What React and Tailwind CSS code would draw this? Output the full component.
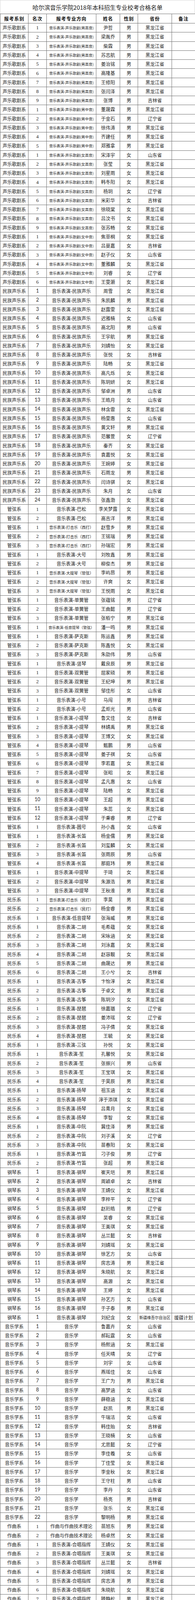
const PROV = { H: "黑龙江省", J: "吉林省", L: "辽宁省", S: "山东省", X: "新疆维吾尔自治区" };

// each entry: name + gender + province code, separated by spaces
const groups = [
  ["声乐歌剧系", "音乐表演-声乐歌剧(男高音)", "text-[9.5px]", "尹哲男H 梁胤乔男H 柴霖男H 苏志航男H 姜治铭男H 高隆基男H 王修阳男H 张闫泽男H 张博男J"],
  ["声乐歌剧系", "音乐表演-声乐歌剧(男中音)", "text-[9.5px]", "董晟霖男H 于金石男L 徐伟涛男H 齐建任男H 郑雅拿男H"],
  ["声乐歌剧系", "音乐表演-声乐歌剧(女高音)", "text-[9.5px]", "宋泽宇女S 张莹女H 刘星雨女H 韩冬阳女H 杨玥女L 米彩华女J 徐晓棠女H 吕汶书女H 张苏畅女H"],
  ["声乐歌剧系", "音乐表演-声乐歌剧(女中音)", "text-[9.5px]", "焦菲桐女H 吕曼嘉女J 赵子仪女S 董雅麟女H 刘睿女L 王雯灏女H"],
  ["民族声乐系", "音乐表演-民族声乐", "text-[12px]", "周雪女H 朱凯麟男H 赵露雯女H 迟雅楠女S 高北阳男S 王宇航男H 刘婧怡女H 张悦女J 陆畅女H 高凡烁女H 陈玥妍女H 邹卓洲男S 王皓月女S 林含霏女H 杨雯惠女S 黄文轩男H 范馨萱女L 秦齐女H 袁嘉悦女H 王婉婷女H 石雨龙男H 闫诗骐女H 朱月女S 张鑫渤女H"],
  ["管弦系", "音乐表演-巴松", "text-[12px]", "李关梦露女H 高吉洋男H"],
  ["管弦系", "音乐表演-打击乐（西打）", "text-[10px]", "赵雪乡男H 王铭瑞男H 孙瑞宏男H"],
  ["管弦系", "音乐表演-大号", "text-[12px]", "刘牧鑫男H 柳俊杰男H"],
  ["管弦系", "音乐表演-大提琴（管弦）", "text-[10px]", "李屿昂男H 许爽女H 王悦雨女H"],
  ["管弦系", "音乐表演-单簧管", "text-[12px]", "张蕴铭男L 王曲懿男L 张栢宁男H"],
  ["管弦系", "音乐表演-低音提琴（管弦）", "text-[9.5px]", "潘一鸣男H"],
  ["管弦系", "音乐表演-萨克斯", "text-[12px]", "陈运鑫男H 陈鑫悦女H 朱劭伟男S"],
  ["管弦系", "音乐表演-竖琴", "text-[12px]", "戴良辰男H"],
  ["管弦系", "音乐表演-双簧管", "text-[12px]", "屈家硕男H 王纪坤男H 邹佳彤女S"],
  ["管弦系", "音乐表演-小号", "text-[12px]", "马闯男J 孟炬光男S"],
  ["管弦系", "音乐表演-小提琴", "text-[12px]", "鲁文佳女J 林婧禹男H 王博文女H 甄鹏男S 姜子祺女S 李若嘉女H 张昭女H 孟凡惠女S 陆畅女H 王超男H 朱蕊女H 于秉睿男L"],
  ["管弦系", "音乐表演-圆号", "text-[12px]", "孙小鑫女S"],
  ["管弦系", "音乐表演-长笛", "text-[12px]", "杨金儒男H 刘玺麟女H 张雨辰男S 那庭玮男H"],
  ["管弦系", "音乐表演-中提琴", "text-[12px]", "于琦女H 朱源浩男H 王秋淮男H"],
  ["民乐系", "音乐表演-打击乐（民打）", "text-[10px]", "李昊男H 杨金睿男H"],
  ["民乐系", "音乐表演-低音提琴", "text-[12px]", "张海威男H"],
  ["民乐系", "音乐表演-二胡", "text-[12px]", "毛希蕴女H 宋咏涵女H 刘泳嘉女H 赵容靓女H 曲晟达男H 王小兮女J"],
  ["民乐系", "音乐表演-古筝", "text-[12px]", "卞怡淳女H 于卓文男H 陈玥汐女H"],
  ["民乐系", "音乐表演-琵琶", "text-[12px]", "徐嘉璐女L 姜沛瑶女L 冯子倩女H 王毓女H"],
  ["民乐系", "音乐表演-三弦", "text-[12px]", "孙悦女H"],
  ["民乐系", "音乐表演-笙", "text-[12px]", "孔馨悦女H 张振兴男S 王宝琪女H 于昊辰男H"],
  ["民乐系", "音乐表演-扬琴", "text-[12px]", "祖玉涵女H 淳于添琪女H 吕青月女H 李智女H"],
  ["民乐系", "音乐表演-中阮", "text-[12px]", "冀佳泽男H 刘子溪女L 苗春阳女H"],
  ["民乐系", "音乐表演-竹笛", "text-[12px]", "刁子俊男L 张超男H"],
  ["钢琴系", "音乐表演-钢琴", "text-[12px]", "崔天垲男H 周颖卓女J 王婧仪女H 李梓平女L 赵珩皓男L 吴睿女H 王美琪女H 丛兰懿女J 刘婧瑶女H 徐艺方女S 房志涛男H 朱晓航女H 高源女H 王婷女H 孙艺方女S 于子泰男H"],
  ["钢琴系", "音乐表演-钢琴", "text-[12px]", "刘纪含女X", "援疆计划"],
  ["音乐学系", "音乐学", "text-[12px]", "鲁嘉卉女S 郝耘霆女S 杨熙涵女H 任天晴女L 刘宇女S 燕瑶佳女S 王广为男H 高梦涵女S 薛稳涵女H 赵凯男H 牛瑞洁女S 韩佳贻女J 王晓楠女S 尤思懿女L 李佳羲女S 丁佳莹女H 李金秋女H 王守柱男S 李丹女S 杨亮男J 张乐女H 黎明杨男H"],
  ["作曲系", "作曲与作曲技术理论", "text-[12px]", "苗旭东男H 杨卓然女H"],
  ["作曲系", "音乐表演-合唱指挥", "text-[12px]", "王婧仪女H 王美琪女H 丛兰懿女J 刘婧瑶女H 房志涛男H 朱晓航女H 滕静松男H 李泽锐男H 石婧雯女H"],
];

const serifDepts = ["声乐歌剧系", "管弦系", "民乐系", "作曲系"];

const rows = groups.flatMap(([dept, major, size, list, note]) =>
  list.split(" ").map((s, i) => ({
    dept,
    major,
    size,
    rank: i + 1,
    name: s.slice(0, -2),
    gender: s.slice(-2, -1),
    prov: s.slice(-1),
    note: note || "",
  }))
);

const widths = ["w-[72px]", "w-[47px]", "w-[127px]", "w-[61px]", "w-[46px]", "w-[87px]", "w-[60px]"];

function Cell({ i, className = "", children }) {
  return (
    <div className={`${widths[i]} shrink-0 flex items-center justify-center border-r border-[#6e6e6e] whitespace-nowrap overflow-hidden ${className}`}>
      {children}
    </div>
  );
}

export default function App() {
  const head = ["报考系别", "名次", "报考专业方向", "姓名", "性别", "省份", "备注"];
  return (
    <div className="w-[500px] bg-white text-[#262626] font-['Noto_Sans_CJK_SC',sans-serif]">
      <div className="h-[35px] flex items-center justify-center pt-[3px] border-t border-x border-[#d8d8d8] text-[15px] text-[#1a1a1a]">
        哈尔滨音乐学院2018年本科招生专业校考合格名单
      </div>
      <div className="border-l border-t border-[#6e6e6e]">
        <div className="flex h-[24px] border-b border-[#6e6e6e] font-bold text-[12px] tracking-[1px] text-[#111]">
          {head.map((h, i) => (
            <Cell key={h} i={i}>{h}</Cell>
          ))}
        </div>
        {rows.map((r, k) => {
          const serif = r.rank < 10 && serifDepts.includes(r.dept);
          return (
            <div key={k} className="flex h-[23.25px] border-b border-[#6e6e6e] text-[12px]">
              <Cell i={0}>{r.dept}</Cell>
              <Cell i={1} className={serif ? "font-['Liberation_Serif',serif] text-[13px]" : "font-['Lato',sans-serif] text-[12.5px]"}>
                {r.rank}
              </Cell>
              <Cell i={2} className={r.size}>{r.major}</Cell>
              <Cell i={3}>{r.name}</Cell>
              <Cell i={4}>{r.gender}</Cell>
              <Cell i={5} className={r.prov === "X" ? "text-[10px]" : ""}>{PROV[r.prov]}</Cell>
              <Cell i={6}>{r.note}</Cell>
            </div>
          );
        })}
      </div>
    </div>
  );
}
